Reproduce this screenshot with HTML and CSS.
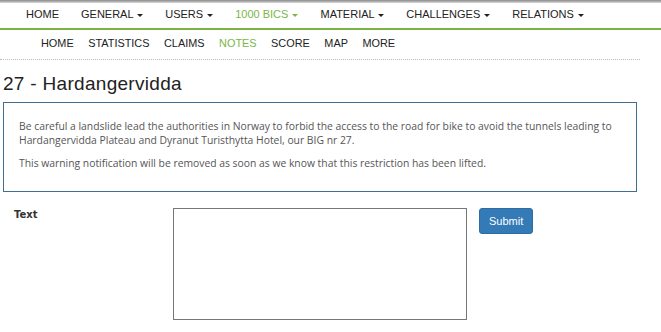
FILE: index.html
```html
<!DOCTYPE html>
<html lang="en">
<head>
    <meta charset="UTF-8">
    <meta name="viewport" content="width=device-width, initial-scale=1.0">
    <title>27 - Hardangervidda</title>
    <link rel="stylesheet" href="styles.css">
</head>
<body>
    <div class="top-strip"></div>
    <nav class="main-nav">
        <a href="#">HOME</a>
        <a href="#">GENERAL <span class="caret"></span></a>
        <a href="#">USERS <span class="caret"></span></a>
        <a href="#" class="active">1000 BICS <span class="caret"></span></a>
        <a href="#">MATERIAL <span class="caret"></span></a>
        <a href="#">CHALLENGES <span class="caret"></span></a>
        <a href="#">RELATIONS <span class="caret"></span></a>
    </nav>
    <nav class="sub-nav">
        <a href="#">HOME</a>
        <a href="#">STATISTICS</a>
        <a href="#">CLAIMS</a>
        <a href="#" class="active">NOTES</a>
        <a href="#">SCORE</a>
        <a href="#">MAP</a>
        <a href="#">MORE</a>
    </nav>

    <h1 class="title">27 - Hardangervidda</h1>

    <div class="warning">
        <p>Be careful a landslide lead the authorities in Norway to forbid the access to the road for bike to avoid the tunnels leading to Hardangervidda Plateau and Dyranut Turisthytta Hotel, our BIG nr 27.</p>
        <p>This warning notification will be removed as soon as we know that this restriction has been lifted.</p>
    </div>

    <form class="note-form">
        <label for="text">Text</label>
        <textarea id="text" name="text"></textarea>
        <button type="submit">Submit</button>
    </form>
</body>
</html>
```

FILE: styles.css
```css
body {
    margin: 0;
    font-family: "Liberation Sans", Arial, sans-serif;
    color: #222;
    background: #fff;
}
.top-strip {
    height: 3px;
    background: linear-gradient(to bottom, #8a8a8a, #d8d8d8);
}
.main-nav {
    display: flex;
    gap: 22px;
    padding: 0 0 3px 26px;
    height: 22px;
    align-items: center;
    border-bottom: 2px solid #7cb342;
}
.main-nav a, .sub-nav a {
    color: #222;
    text-decoration: none;
    font-size: 11px;
}
.sub-nav a {
    font-size: 10.9px;
}
.main-nav a.active, .sub-nav a.active {
    color: #7ab648;
}
.caret {
    display: inline-block;
    width: 0;
    height: 0;
    margin-left: 1px;
    vertical-align: middle;
    border-top: 3px solid;
    border-left: 3px solid transparent;
    border-right: 3px solid transparent;
}
.sub-nav {
    display: flex;
    gap: 14.5px;
    padding: 0 0 3px 41px;
    height: 26px;
    align-items: center;
    margin-right: 21px;
    border-bottom: 1px dotted #bbb;
}
.title {
    margin: 13px 0 0 3px;
    font-size: 19px;
    font-weight: normal;
    letter-spacing: 0.3px;
    color: #222;
}
.warning {
    margin: 7px 24px 0 3px;
    border: 1px solid #3f6f92;
    padding: 16px 15px 21px 15px;
    font-family: "Open Sans", sans-serif;
    font-size: 10.35px;
    line-height: 14px;
    color: #555;
}
.warning p {
    margin: 0;
}
.warning p + p {
    margin-top: 9px;
}
.note-form {
    display: flex;
    align-items: flex-start;
    margin-top: 16px;
    font-family: "DejaVu Sans", sans-serif;
}
.note-form label {
    width: 159px;
    padding: 1px 0 0 14px;
    font-size: 10px;
    font-weight: bold;
    color: #333;
}
.note-form textarea {
    width: 294px;
    height: 112px;
    border: 1px solid #777;
    box-sizing: border-box;
    margin: 0;
    resize: none;
}
.note-form button {
    margin-left: 12px;
    padding: 5px 9px;
    line-height: 14px;
    background-color: #337ab7;
    color: #fff;
    border: 1px solid #2e6da4;
    border-radius: 3px;
    font-family: "Liberation Sans", Arial, sans-serif;
    font-size: 11px;
    cursor: pointer;
}
```
